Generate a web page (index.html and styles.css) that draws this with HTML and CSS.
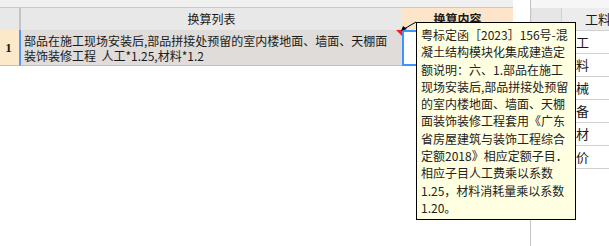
FILE: index.html
```html
<!DOCTYPE html>
<html lang="zh-CN">
<head>
  <meta charset="UTF-8" />
  <title>换算列表</title>
  <link rel="stylesheet" href="styles.css">
</head>
<body>
  <div class="screen">
    <div class="left-grid">
      <div class="strip"></div>
      <div class="head">
        <div class="num"></div>
        <div class="col-list">换算列表</div>
        <div class="col-content">换算内容</div>
      </div>
      <div class="row">
        <div class="num">1</div>
        <div class="cell-list">部品在施工现场安装后,部品拼接处预留的室内楼地面、墙面、天棚面<br>装饰装修工程&nbsp;&nbsp;人工*1.25,材料*1.2</div>
        <div class="cell-content"></div>
      </div>
    </div>

    <div class="right-grid">
      <div class="strip"></div>
      <div class="head">
        <div class="idx"></div>
        <div class="name">工料</div>
      </div>
      <div class="item"><div class="idx"></div><div class="name">人工</div></div>
      <div class="item"><div class="idx"></div><div class="name">材料</div></div>
      <div class="item"><div class="idx"></div><div class="name">机械</div></div>
      <div class="item"><div class="idx"></div><div class="name">设备</div></div>
      <div class="item"><div class="idx"></div><div class="name">主材</div></div>
      <div class="item"><div class="idx"></div><div class="name">单价</div></div>
    </div>
  </div>

  <!-- 批注提示框 -->
  <svg class="pointer" width="22" height="14" viewBox="0 0 22 14">
    <line x1="18" y1="2" x2="6" y2="9" stroke="#000" stroke-width="1" />
    <polygon points="3,11 5,6 9,9" fill="#000" />
  </svg>
  <div class="tooltip">
    粤标定函［2023］156号-混<br>
    凝土结构模块化集成建造定<br>
    额说明：六、1.部品在施工<br>
    现场安装后,部品拼接处预留<br>
    的室内楼地面、墙面、天棚<br>
    面装饰装修工程套用《广东<br>
    省房屋建筑与装饰工程综合<br>
    定额2018》相应定额子目．<br>
    相应子目人工费乘以系数<br>
    1.25，材料消耗量乘以系数<br>
    1.20。
  </div>
</body>
</html>
```

FILE: styles.css
```css
body {
  margin: 0;
  width: 609px;
  height: 246px;
  overflow: hidden;
  background: #ffffff;
  font-family: "Noto Sans CJK SC", sans-serif;
  font-size: 12px;
  color: #1a1a1a;
  position: relative;
}

.screen {
  display: flex;
  height: 246px;
}

/* 左侧换算表格 */
.left-grid {
  width: 530px;
  border-right: 1px solid #c4c4c4;
  flex-shrink: 0;
}

.left-grid .strip {
  width: 513px;
  height: 7px;
  background: #f0f0f0;
  border-bottom: 1px solid #c8c8c8;
}

.left-grid .head {
  display: flex;
  height: 22px;
  line-height: 22px;
}

.left-grid .head .num {
  width: 19px;
  background: #e8e8e8;
  border-right: 2px solid #c4c4c4;
}

.col-list {
  width: 381px;
  background: #e8e8e8;
  text-align: center;
}

.col-content {
  width: 111px;
  background: #fce5c8;
  text-align: center;
  font-weight: bold;
}

.row {
  display: flex;
  height: 36px;
}

.row .num {
  width: 21px;
  box-sizing: border-box;
  background: #fde8ca;
  border-bottom: 1px solid #c0c0c0;
  border-right: 2px solid #4a9bff;
  font-family: "Liberation Serif", serif;
  font-weight: bold;
  font-size: 13px;
  line-height: 35px;
  text-align: center;
  padding-right: 2px;
}

.cell-list {
  position: relative;
  width: 381px;
  box-sizing: border-box;
  background: #e0dcd9;
  border-bottom: 1px solid #c0c0c0;
  padding: 3px 0 0 3px;
  line-height: 15px;
  white-space: nowrap;
  overflow: hidden;
}

/* 批注红色角标 */
.cell-list::after {
  content: "";
  position: absolute;
  top: 0;
  right: 0;
  border-top: 6px solid #ff1a1a;
  border-left: 6px solid transparent;
}

.cell-content {
  width: 111px;
  box-sizing: border-box;
  border: 2px solid #3d93ff;
  background: #ffffff;
}

/* 右侧工料机 */
.right-grid {
  flex: 1;
  overflow: hidden;
  font-size: 13px;
}

.right-grid .strip {
  height: 8px;
  background: #f6f6f6;
}

.right-grid .head {
  display: flex;
  height: 23px;
  box-sizing: border-box;
  line-height: 22px;
  border-bottom: 1px solid #d0d0d0;
  background: #ececec;
}

.right-grid .idx {
  width: 29px;
  flex-shrink: 0;
  border-left: 1px solid #e0e0e0;
  border-right: 1px solid #d0d0d0;
}

.right-grid .head .idx {
  background: #e6e6e6;
}

.right-grid .head .name {
  padding-left: 23px;
  white-space: nowrap;
}

.item {
  display: flex;
  height: 23px;
  box-sizing: border-box;
  border-bottom: 1px solid #d0d0d0;
  line-height: 22px;
}

.item .name {
  padding-left: 1px;
  white-space: nowrap;
}

/* 提示框 */
.tooltip {
  position: absolute;
  left: 416px;
  top: 22px;
  width: 160px;
  height: 198px;
  box-sizing: border-box;
  background: #ffffe1;
  border: 1px solid #000000;
  padding: 3px 0 0 4px;
  line-height: 17.3px;
  white-space: nowrap;
  color: #222222;
  overflow: hidden;
}

.pointer {
  position: absolute;
  left: 398px;
  top: 20px;
}
```
